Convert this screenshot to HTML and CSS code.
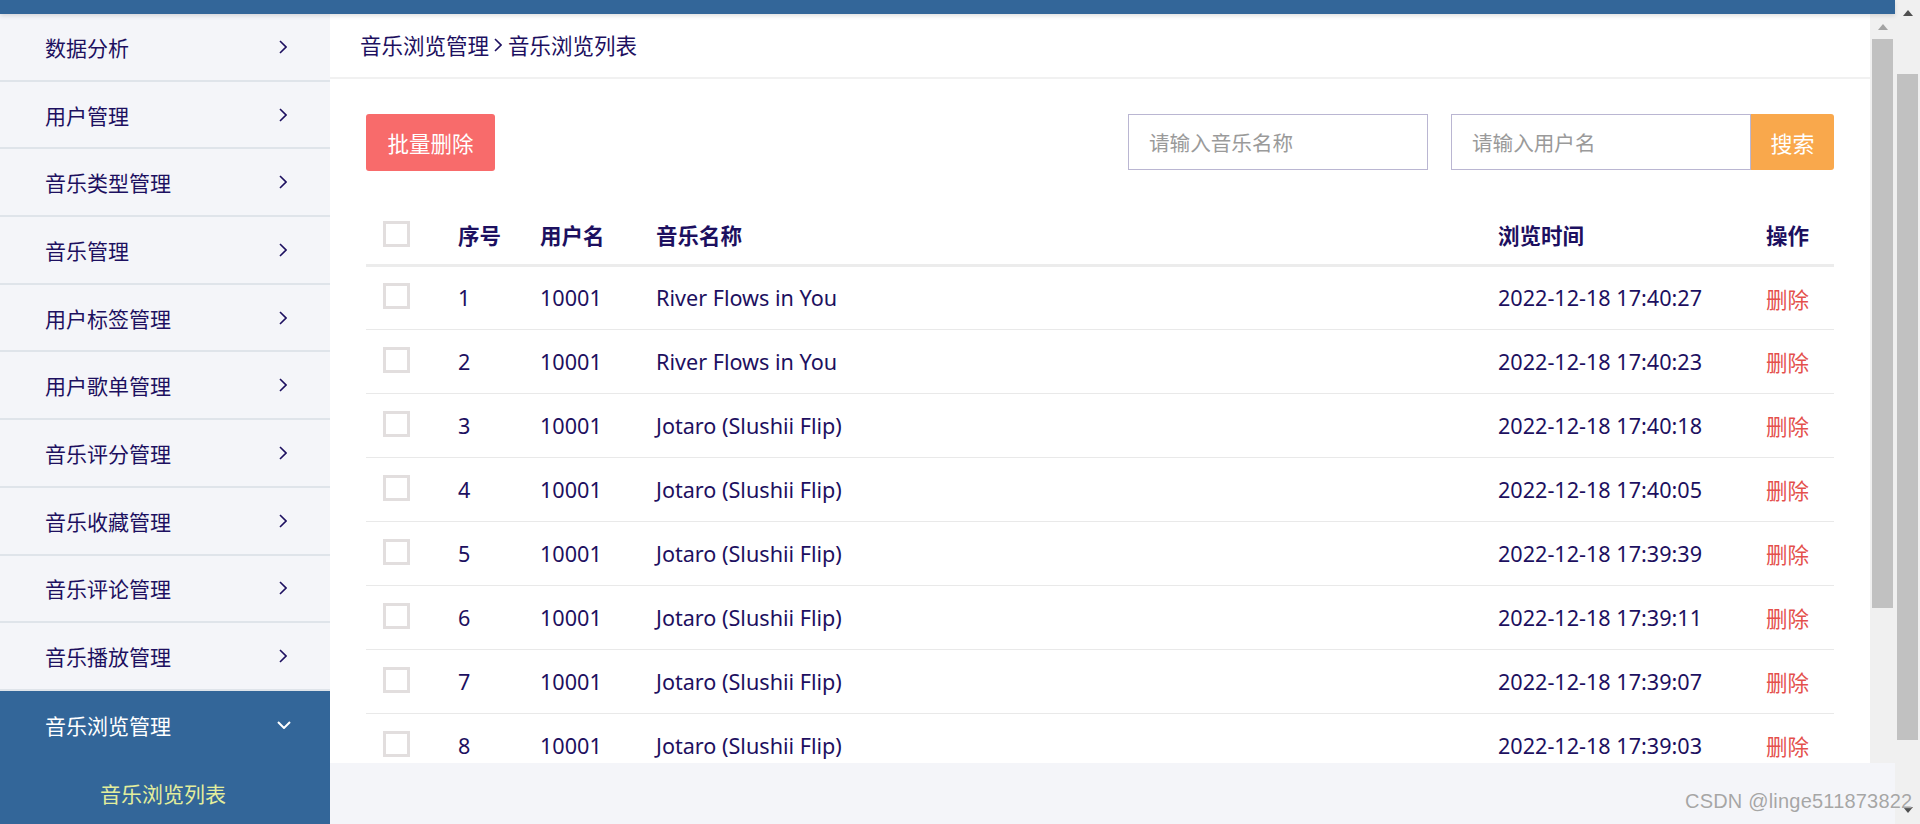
FILE: index.html
```html
<!DOCTYPE html>
<html lang="zh-CN">
<head>
<meta charset="utf-8">
<title>音乐浏览列表</title>
<link rel="stylesheet" href="styles.css">
</head>
<body>
<div class="page">
  <div class="main">
    <div class="topbar"></div>
    <div class="body">
      <aside class="sidebar">
        <div class="nav-item"><span>数据分析</span><svg class="chev" width="8" height="14" viewBox="0 0 8 14"><path d="M1 1 L7 7 L1 13" fill="none" stroke="#1d1060" stroke-width="1.6"/></svg></div>
        <div class="nav-item"><span>用户管理</span><svg class="chev" width="8" height="14" viewBox="0 0 8 14"><path d="M1 1 L7 7 L1 13" fill="none" stroke="#1d1060" stroke-width="1.6"/></svg></div>
        <div class="nav-item"><span>音乐类型管理</span><svg class="chev" width="8" height="14" viewBox="0 0 8 14"><path d="M1 1 L7 7 L1 13" fill="none" stroke="#1d1060" stroke-width="1.6"/></svg></div>
        <div class="nav-item"><span>音乐管理</span><svg class="chev" width="8" height="14" viewBox="0 0 8 14"><path d="M1 1 L7 7 L1 13" fill="none" stroke="#1d1060" stroke-width="1.6"/></svg></div>
        <div class="nav-item"><span>用户标签管理</span><svg class="chev" width="8" height="14" viewBox="0 0 8 14"><path d="M1 1 L7 7 L1 13" fill="none" stroke="#1d1060" stroke-width="1.6"/></svg></div>
        <div class="nav-item"><span>用户歌单管理</span><svg class="chev" width="8" height="14" viewBox="0 0 8 14"><path d="M1 1 L7 7 L1 13" fill="none" stroke="#1d1060" stroke-width="1.6"/></svg></div>
        <div class="nav-item"><span>音乐评分管理</span><svg class="chev" width="8" height="14" viewBox="0 0 8 14"><path d="M1 1 L7 7 L1 13" fill="none" stroke="#1d1060" stroke-width="1.6"/></svg></div>
        <div class="nav-item"><span>音乐收藏管理</span><svg class="chev" width="8" height="14" viewBox="0 0 8 14"><path d="M1 1 L7 7 L1 13" fill="none" stroke="#1d1060" stroke-width="1.6"/></svg></div>
        <div class="nav-item"><span>音乐评论管理</span><svg class="chev" width="8" height="14" viewBox="0 0 8 14"><path d="M1 1 L7 7 L1 13" fill="none" stroke="#1d1060" stroke-width="1.6"/></svg></div>
        <div class="nav-item"><span>音乐播放管理</span><svg class="chev" width="8" height="14" viewBox="0 0 8 14"><path d="M1 1 L7 7 L1 13" fill="none" stroke="#1d1060" stroke-width="1.6"/></svg></div>
        <div class="nav-group">
          <div class="nav-item active"><span>音乐浏览管理</span><svg class="chev-down" width="14" height="8" viewBox="0 0 14 8"><path d="M1 1 L7 7 L13 1" fill="none" stroke="#ffffff" stroke-width="2"/></svg></div>
          <div class="nav-sub">音乐浏览列表</div>
        </div>
      </aside>
      <div class="content">
        <div class="viewport">
          <div class="panel">
            <div class="crumbs"><span>音乐浏览管理</span><svg class="crumb-sep" width="8" height="14" viewBox="0 0 8 14"><path d="M1 1 L7 7 L1 13" fill="none" stroke="#1d1060" stroke-width="1.6"/></svg><span>音乐浏览列表</span></div>
            <div class="toolbar">
              <button class="btn-danger">批量删除</button>
              <div class="search">
                <input class="field" type="text" placeholder="请输入音乐名称">
                <div class="search-group">
                  <input class="field" type="text" placeholder="请输入用户名">
                  <button class="btn-search">搜索</button>
                </div>
              </div>
            </div>
            <table class="grid">
              <colgroup>
                <col class="c-check"><col class="c-no"><col class="c-user"><col class="c-music"><col class="c-time"><col class="c-op">
              </colgroup>
              <thead>
                <tr><th><span class="box"></span></th><th>序号</th><th>用户名</th><th>音乐名称</th><th>浏览时间</th><th>操作</th></tr>
              </thead>
              <tbody>
                <tr><td><span class="box"></span></td><td>1</td><td>10001</td><td>River Flows in You</td><td>2022-12-18 17:40:27</td><td class="op">删除</td></tr>
                <tr><td><span class="box"></span></td><td>2</td><td>10001</td><td>River Flows in You</td><td>2022-12-18 17:40:23</td><td class="op">删除</td></tr>
                <tr><td><span class="box"></span></td><td>3</td><td>10001</td><td>Jotaro (Slushii Flip)</td><td>2022-12-18 17:40:18</td><td class="op">删除</td></tr>
                <tr><td><span class="box"></span></td><td>4</td><td>10001</td><td>Jotaro (Slushii Flip)</td><td>2022-12-18 17:40:05</td><td class="op">删除</td></tr>
                <tr><td><span class="box"></span></td><td>5</td><td>10001</td><td>Jotaro (Slushii Flip)</td><td>2022-12-18 17:39:39</td><td class="op">删除</td></tr>
                <tr><td><span class="box"></span></td><td>6</td><td>10001</td><td>Jotaro (Slushii Flip)</td><td>2022-12-18 17:39:11</td><td class="op">删除</td></tr>
                <tr><td><span class="box"></span></td><td>7</td><td>10001</td><td>Jotaro (Slushii Flip)</td><td>2022-12-18 17:39:07</td><td class="op">删除</td></tr>
                <tr><td><span class="box"></span></td><td>8</td><td>10001</td><td>Jotaro (Slushii Flip)</td><td>2022-12-18 17:39:03</td><td class="op">删除</td></tr>
              </tbody>
            </table>
          </div>
          <div class="scroll inner">
            <span class="arr-up light"></span>
            <span class="thumb inner-thumb"></span>
          </div>
        </div>
        <div class="bottom-gap"></div>
      </div>
    </div>
  </div>
  <div class="scroll outer">
    <span class="arr-up dark"></span>
    <span class="thumb outer-thumb"></span>
    <span class="arr-down dark"></span>
  </div>
  <div class="watermark">CSDN @linge511873822</div>
</div>
</body>
</html>
```

FILE: styles.css
```css
* { box-sizing: border-box; }
html, body { margin: 0; padding: 0; }
body {
  width: 1920px;
  height: 824px;
  overflow: hidden;
  font-family: "Noto Sans", "Noto Sans CJK SC", sans-serif;
  font-size: 21px;
  color: #1d1060;
  background: #f4f5f9;
}
.page {
  position: relative;
  display: flex;
  width: 1920px;
  height: 824px;
}
.main {
  width: 1895px;
  display: flex;
  flex-direction: column;
}
.topbar {
  height: 14px;
  background: #336699;
  box-shadow: 0 2px 4px rgba(0,0,0,0.12);
  position: relative;
  z-index: 2;
}
.body {
  display: flex;
  height: 810px;
}
.sidebar {
  width: 330px;
  background: #f4f5f9;
  overflow: hidden;
}
.nav-item {
  height: 67.7px;
  border-bottom: 2px solid #dfe4ea;
  display: flex;
  align-items: center;
  justify-content: space-between;
  padding: 0 43px 0 45px;
  font-family: "Noto Sans CJK SC", sans-serif;
  font-size: 21px;
}
.nav-group {
  background: #336699;
}
.nav-item.active {
  color: #ffffff;
  border-bottom: none;
  padding-right: 39px;
}
.nav-sub {
  height: 68px;
  display: flex;
  align-items: center;
  padding-left: 100px;
  color: #e3ee9c;
  font-family: "Noto Sans CJK SC", sans-serif;
  font-size: 21px;
}
.content {
  width: 1565px;
  display: flex;
  flex-direction: column;
}
.viewport {
  height: 749px;
  display: flex;
}
.panel {
  width: 1540px;
  background: #ffffff;
  overflow: hidden;
  padding: 0 36px;
}
.crumbs {
  height: 65px;
  margin: 0 -36px;
  padding: 0 0 2px 30px;
  border-bottom: 2px solid #f1f1f1;
  display: flex;
  align-items: center;
  font-family: "Noto Sans CJK SC", sans-serif;
  font-size: 21.5px;
}
.crumb-sep { margin: 0 6px 0 5px; }
.toolbar {
  margin-top: 35px;
  display: flex;
  justify-content: space-between;
  align-items: flex-start;
}
.btn-danger {
  width: 129px;
  height: 57px;
  border: none;
  border-radius: 3px;
  background: #f86b6b;
  color: #ffffff;
  font-family: "Noto Sans CJK SC", sans-serif;
  font-size: 21.5px;
  padding: 0;
}
.search {
  display: flex;
  gap: 23px;
}
.search-group { display: flex; }
.field {
  width: 300px;
  height: 56px;
  border: 1px solid #bab6d2;
  padding: 0 20px;
  font-family: "Noto Sans CJK SC", sans-serif;
  font-size: 20.6px;
  color: #1d1060;
  outline: none;
  background: #fff;
}
.field::placeholder { color: #9a9a9a; }
.btn-search {
  width: 83px;
  height: 56px;
  border: none;
  border-radius: 0 3px 3px 0;
  background: #f9a84c;
  color: #ffffff;
  font-family: "Noto Sans CJK SC", sans-serif;
  font-size: 22px;
  padding: 0;
}
.grid {
  margin-top: 34px;
  width: 1468px;
  table-layout: fixed;
  border-collapse: collapse;
}
.c-check { width: 77px; }
.c-no { width: 82px; }
.c-user { width: 116px; }
.c-music { width: 842px; }
.c-time { width: 268px; }
.c-op { width: 83px; }
.grid th, .grid td {
  text-align: left;
  padding: 0 0 0 15px;
  white-space: nowrap;
}
.grid th:first-child, .grid td:first-child { padding-left: 17px; }
.grid th {
  height: 60px;
  border-bottom: 3px solid #ececec;
  font-family: "Noto Sans CJK SC", sans-serif;
  font-weight: 700;
  font-size: 21.5px;
}
.grid td {
  height: 64px;
  border-bottom: 1px solid #e9e9e9;
  font-size: 21.6px;
}
.grid td:first-child { padding-bottom: 3px; }
.grid td.op {
  color: #e4504c;
  font-family: "Noto Sans CJK SC", sans-serif;
  font-size: 21.5px;
  padding-top: 1px;
}
.box {
  display: block;
  width: 27px;
  height: 26px;
  border: 3px solid #e2dede;
  background: #fff;
}
.scroll {
  background: #f0f0f0;
  display: flex;
  flex-direction: column;
  align-items: center;
}
.scroll.inner {
  width: 25px;
  height: 749px;
}
.scroll.outer {
  width: 25px;
  height: 824px;
}
.arr-up, .arr-down {
  width: 0;
  height: 0;
  border-left: 5.5px solid transparent;
  border-right: 5.5px solid transparent;
}
.arr-up.light { border-bottom: 6px solid #a3a3a3; margin-top: 10px; }
.arr-up.dark { border-bottom: 6px solid #505050; margin-top: 10px; }
.arr-down.dark { border-top: 6px solid #505050; margin-top: 67px; }
.thumb {
  display: block;
  width: 21px;
  background: #c1c1c1;
}
.inner-thumb { height: 569px; margin-top: 9px; }
.outer-thumb { height: 666px; margin-top: 58px; }
.watermark {
  position: absolute;
  left: 1685px;
  top: 790px;
  font-family: "Liberation Sans", Arial, sans-serif;
  font-size: 20px;
  color: #a6a6a6;
  letter-spacing: 0.2px;
  text-shadow: 0 0 1px #fff;
}
```
